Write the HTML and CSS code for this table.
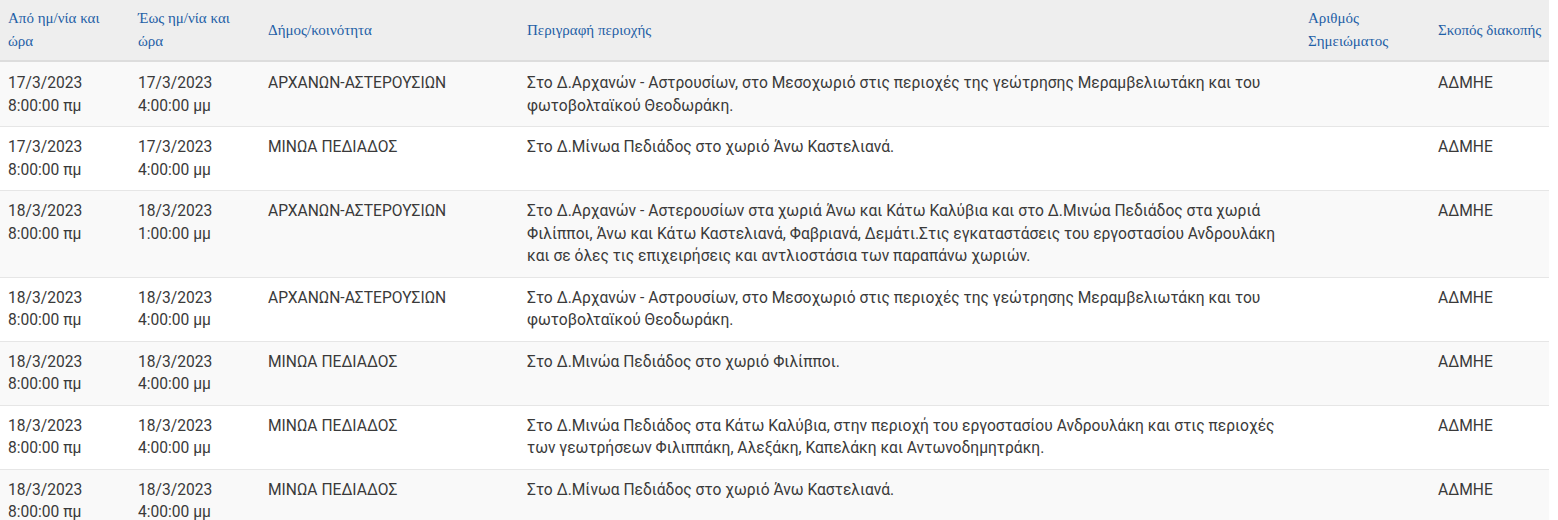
FILE: index.html
```html
<!DOCTYPE html>
<html lang="el">
<head>
<meta charset="utf-8">
<title>Διακοπές ρεύματος</title>
<link rel="stylesheet" href="styles.css">
</head>
<body>
<table class="outages">
  <colgroup>
    <col class="c-from">
    <col class="c-to">
    <col class="c-muni">
    <col class="c-desc">
    <col class="c-num">
    <col class="c-purpose">
  </colgroup>
  <thead>
    <tr>
      <th>Από ημ/νία και ώρα</th>
      <th>Έως ημ/νία και ώρα</th>
      <th>Δήμος/κοινότητα</th>
      <th>Περιγραφή περιοχής</th>
      <th>Αριθμός Σημειώματος</th>
      <th class="single-line">Σκοπός διακοπής</th>
    </tr>
  </thead>
  <tbody>
    <tr>
      <td>17/3/2023 8:00:00 πμ</td>
      <td>17/3/2023 4:00:00 μμ</td>
      <td>ΑΡΧΑΝΩΝ-ΑΣΤΕΡΟΥΣΙΩΝ</td>
      <td>Στο Δ.Αρχανών - Αστρουσίων, στο Μεσοχωριό στις περιοχές της γεώτρησης Μεραμβελιωτάκη και του φωτοβολταϊκού Θεοδωράκη.</td>
      <td></td>
      <td>ΑΔΜΗΕ</td>
    </tr>
    <tr>
      <td>17/3/2023 8:00:00 πμ</td>
      <td>17/3/2023 4:00:00 μμ</td>
      <td>ΜΙΝΩΑ ΠΕΔΙΑΔΟΣ</td>
      <td>Στο Δ.Μίνωα Πεδιάδος στο χωριό Άνω Καστελιανά.</td>
      <td></td>
      <td>ΑΔΜΗΕ</td>
    </tr>
    <tr>
      <td>18/3/2023 8:00:00 πμ</td>
      <td>18/3/2023 1:00:00 μμ</td>
      <td>ΑΡΧΑΝΩΝ-ΑΣΤΕΡΟΥΣΙΩΝ</td>
      <td>Στο Δ.Αρχανών - Αστερουσίων στα χωριά Άνω και Κάτω Καλύβια και στο Δ.Μινώα Πεδιάδος στα χωριά Φιλίπποι, Άνω και Κάτω Καστελιανά, Φαβριανά, Δεμάτι.Στις εγκαταστάσεις του εργοστασίου Ανδρουλάκη και σε όλες τις επιχειρήσεις και αντλιοστάσια των παραπάνω χωριών.</td>
      <td></td>
      <td>ΑΔΜΗΕ</td>
    </tr>
    <tr>
      <td>18/3/2023 8:00:00 πμ</td>
      <td>18/3/2023 4:00:00 μμ</td>
      <td>ΑΡΧΑΝΩΝ-ΑΣΤΕΡΟΥΣΙΩΝ</td>
      <td>Στο Δ.Αρχανών - Αστρουσίων, στο Μεσοχωριό στις περιοχές της γεώτρησης Μεραμβελιωτάκη και του φωτοβολταϊκού Θεοδωράκη.</td>
      <td></td>
      <td>ΑΔΜΗΕ</td>
    </tr>
    <tr>
      <td>18/3/2023 8:00:00 πμ</td>
      <td>18/3/2023 4:00:00 μμ</td>
      <td>ΜΙΝΩΑ ΠΕΔΙΑΔΟΣ</td>
      <td>Στο Δ.Μινώα Πεδιάδος στο χωριό Φιλίπποι.</td>
      <td></td>
      <td>ΑΔΜΗΕ</td>
    </tr>
    <tr>
      <td>18/3/2023 8:00:00 πμ</td>
      <td>18/3/2023 4:00:00 μμ</td>
      <td>ΜΙΝΩΑ ΠΕΔΙΑΔΟΣ</td>
      <td>Στο Δ.Μινώα Πεδιάδος στα Κάτω Καλύβια, στην περιοχή του εργοστασίου Ανδρουλάκη και στις περιοχές των γεωτρήσεων Φιλιππάκη, Αλεξάκη, Καπελάκη και Αντωνοδημητράκη.</td>
      <td></td>
      <td>ΑΔΜΗΕ</td>
    </tr>
    <tr>
      <td>18/3/2023 8:00:00 πμ</td>
      <td>18/3/2023 4:00:00 μμ</td>
      <td>ΜΙΝΩΑ ΠΕΔΙΑΔΟΣ</td>
      <td>Στο Δ.Μίνωα Πεδιάδος στο χωριό Άνω Καστελιανά.</td>
      <td></td>
      <td>ΑΔΜΗΕ</td>
    </tr>
  </tbody>
</table>
</body>
</html>
```

FILE: styles.css
```css
html, body {
  margin: 0;
  padding: 0;
  background: #ffffff;
}

.outages {
  width: 1549px;
  border-collapse: collapse;
  border-spacing: 0;
  table-layout: fixed;
  font-family: Roboto, "Noto Sans", sans-serif;
  font-size: 15.6px;
  color: #3a3a3a;
}

.c-from { width: 130px; }
.c-to { width: 130px; }
.c-muni { width: 259px; }
.c-desc { width: 781px; }
.c-num { width: 130px; }
.c-purpose { width: 119px; }

.outages thead th {
  background: #eeeeee;
  font-family: "Liberation Serif", "DejaVu Serif", serif;
  font-weight: normal;
  font-size: 15px;
  line-height: 23px;
  color: #1f5fa6;
  text-align: left;
  vertical-align: middle;
  padding: 7px 8px;
  border-bottom: 2px solid #dddddd;
}

.outages thead th.single-line {
  white-space: nowrap;
}

.outages tbody td {
  vertical-align: top;
  line-height: 22.5px;
  padding: 9px 8px;
  border-top: 1px solid #e6e6e6;
}

.outages tbody tr:first-child td {
  border-top: 0;
  padding-top: 10px;
}

.outages tbody tr:nth-child(odd) {
  background: #f9f9f9;
}

.outages tbody tr:nth-child(even) {
  background: #ffffff;
}
```
